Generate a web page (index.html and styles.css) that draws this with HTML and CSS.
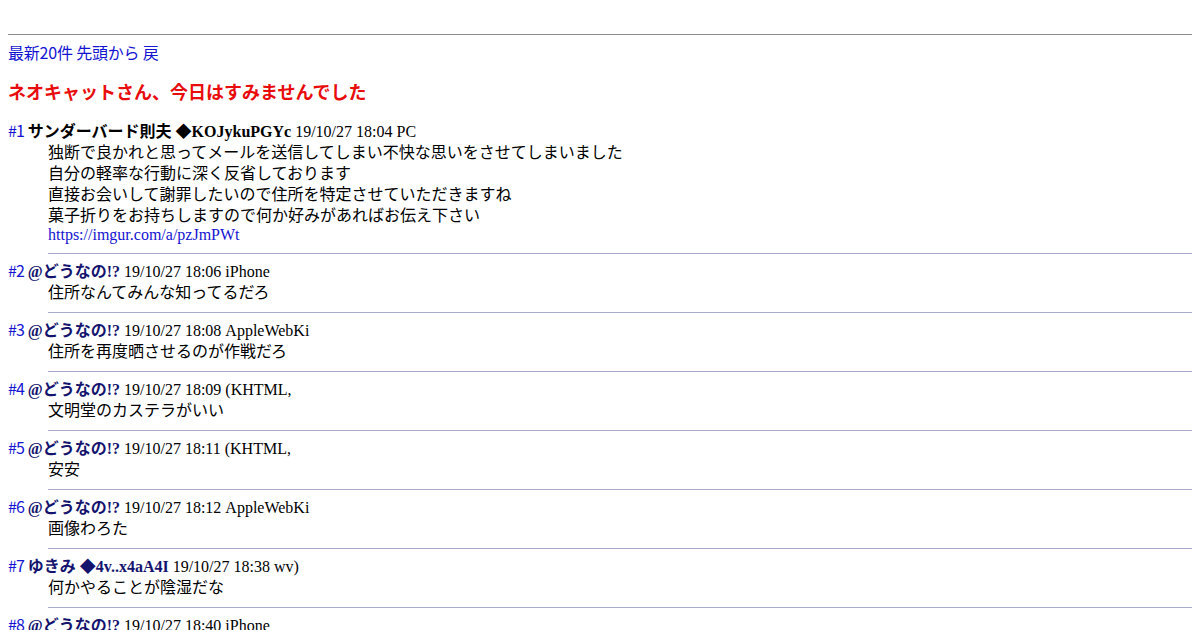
FILE: index.html
```html
<!DOCTYPE html>
<html lang="ja">
<head>
<meta charset="utf-8">
<title>ネオキャットさん、今日はすみませんでした</title>
<link rel="stylesheet" href="styles.css">
</head>
<body>
<div class="spacer">&nbsp;</div>
<div class="rule"></div>
<div class="nav"><a href="#">最新20件</a> <a href="#">先頭から</a> <a href="#">戻</a></div>
<h2 class="title">ネオキャットさん、今日はすみませんでした</h2>
<dl class="thread">
  <dt><a class="num" href="#">#1</a> <b class="name first">サンダーバード則夫 ◆KOJykuPGYc</b> 19/10/27 18:04 PC</dt>
  <dd>独断で良かれと思ってメールを送信してしまい不快な思いをさせてしまいました<br>自分の軽率な行動に深く反省しております<br>直接お会いして謝罪したいので住所を特定させていただきますね<br>菓子折りをお持ちしますので何か好みがあればお伝え下さい<div class="link-line"><a href="#">https://imgur.com/a/pzJmPWt</a></div><hr class="sep"></dd>
  <dt><a class="num" href="#">#2</a> <b class="name">@どうなの!?</b> 19/10/27 18:06 iPhone</dt>
  <dd>住所なんてみんな知ってるだろ<hr class="sep"></dd>
  <dt><a class="num" href="#">#3</a> <b class="name">@どうなの!?</b> 19/10/27 18:08 AppleWebKi</dt>
  <dd>住所を再度晒させるのが作戦だろ<hr class="sep"></dd>
  <dt><a class="num" href="#">#4</a> <b class="name">@どうなの!?</b> 19/10/27 18:09 (KHTML,</dt>
  <dd>文明堂のカステラがいい<hr class="sep"></dd>
  <dt><a class="num" href="#">#5</a> <b class="name">@どうなの!?</b> 19/10/27 18:11 (KHTML,</dt>
  <dd>安安<hr class="sep"></dd>
  <dt><a class="num" href="#">#6</a> <b class="name">@どうなの!?</b> 19/10/27 18:12 AppleWebKi</dt>
  <dd>画像わろた<hr class="sep"></dd>
  <dt><a class="num" href="#">#7</a> <b class="name">ゆきみ ◆4v..x4aA4I</b> 19/10/27 18:38 wv)</dt>
  <dd>何かやることが陰湿だな<hr class="sep"></dd>
  <dt><a class="num" href="#">#8</a> <b class="name">@どうなの!?</b> 19/10/27 18:40 iPhone</dt>
  <dd>謝罪の気持ちが伝わってくる<hr class="sep"></dd>
</dl>
</body>
</html>
```

FILE: styles.css
```css
html {
  background: #ffffff;
}
body {
  margin: 8px;
  font-family: "Liberation Serif", "Noto Sans CJK JP", serif;
  font-size: 16px;
  line-height: 21px;
  color: #000000;
}
a {
  color: #1414d2;
  text-decoration: none;
}
.spacer {
  height: 18px;
  line-height: 18px;
}
.rule {
  margin-top: 8px;
  border-top: 1px solid #8e8e8e;
}
.nav {
  margin-top: 7px;
  font-family: "Noto Sans CJK JP", sans-serif;
  line-height: 21px;
  letter-spacing: -0.2px;
}
.nav a {
  line-height: 16px;
}
.title {
  margin: 16px 0 18px;
  font-size: 18px;
  line-height: 24px;
  font-weight: bold;
  color: #e80c0c;
  font-family: "Noto Sans CJK JP", sans-serif;
}
.thread {
  margin: 0;
}
.thread dt {
  margin: 0;
}
.thread dd {
  margin: 0 0 0 40px;
}
.link-line {
  line-height: 18px;
}
.num {
  font-family: "Noto Sans CJK JP", sans-serif;
  line-height: 16px;
  letter-spacing: -1px;
}
.name {
  color: #14146e;
  font-size: 16px;
}
.name.first {
  color: #000000;
}
.sep {
  border: 0;
  border-top: 1px solid #a8a8c8;
  height: 0;
  margin: 9px 0 7px;
}
```
